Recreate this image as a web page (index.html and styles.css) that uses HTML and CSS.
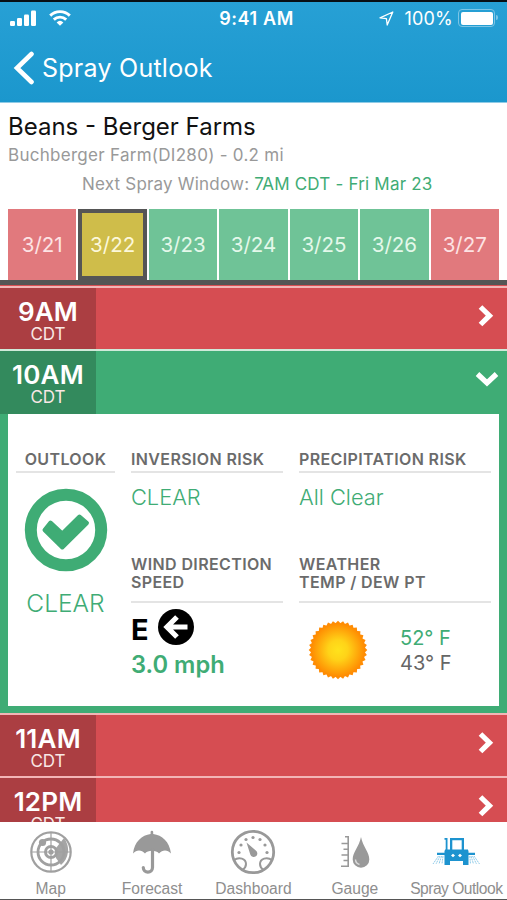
FILE: index.html
```html
<!DOCTYPE html>
<html lang="en">
<head>
    <meta charset="UTF-8" />
    <title>Spray Outlook</title>
    <link rel="stylesheet" href="styles.css">
</head>
<body>
<div class="app">

    <header class="header">
        <div class="status">
            <div class="status-left">
                <svg width="26" height="16" viewBox="0 0 26 16" fill="#fff">
                    <rect x="0" y="11" width="5" height="5" rx="1.2"/>
                    <rect x="7" y="8" width="5" height="8" rx="1.2"/>
                    <rect x="14" y="4.500" width="5" height="11.500" rx="1.2"/>
                    <rect x="21" y="0.500" width="5" height="15.500" rx="1.2"/>
                </svg>
                <svg width="22" height="16" viewBox="0 0 22 16" fill="none" stroke="#fff" stroke-width="2.900">
                    <path d="M1.200 5.600a14 14 0 0 1 19.600 0"/>
                    <path d="M4.800 9.600a9 9 0 0 1 12.400 0"/>
                    <path d="M7.600 12.400a5 5 0 0 1 6.800 0L11 15.800z" fill="#fff" stroke="none"/>
                </svg>
            </div>
            <span class="clock">9:41 AM</span>
            <div class="status-right">
                <svg width="15" height="15" viewBox="0 0 15 15" fill="none" stroke="#fff" stroke-width="1.300" stroke-linejoin="round">
                    <path d="M13.800 1L1 6.800l6.400 .8.800 6.400z"/>
                </svg>
                <span class="percent">100%</span>
                <span class="battery"></span>
            </div>
        </div>
        <div class="nav">
            <svg width="22" height="34" viewBox="0 0 22 34" fill="none" stroke="#fff" stroke-width="4.600" stroke-linecap="round">
                <path d="M18.500 3L4 17L18.500 31"/>
            </svg>
            <span class="nav-title">Spray Outlook</span>
        </div>
    </header>

    <section class="field">
        <h1 class="field-name">Beans - Berger Farms</h1>
        <div class="field-place">Buchberger Farm(DI280) - 0.2 mi</div>
        <div class="field-next"><span class="next-label">Next Spray Window:</span> <span class="next-time">7AM CDT - Fri Mar 23</span></div>
    </section>

    <div class="days">
        <div class="day bad">3/21</div>
        <div class="day selected">3/22</div>
        <div class="day">3/23</div>
        <div class="day">3/24</div>
        <div class="day">3/25</div>
        <div class="day">3/26</div>
        <div class="day bad">3/27</div>
    </div>

    <main class="hours">
        <div class="hour">
            <div class="time"><b>9AM</b><span>CDT</span></div>
            <svg class="arrow" width="16" height="24" viewBox="0 0 16 24"><path d="M2.500 3L11.500 11.700L2.500 20.500"/></svg>
        </div>

        <div class="hour good">
            <div class="time"><b>10AM</b><span>CDT</span></div>
            <svg class="arrow down" width="24" height="16" viewBox="0 0 24 16"><path d="M2.500 3L12 12L21.500 3"/></svg>
        </div>
        <div class="details">
            <div class="outlook">
                <h2>OUTLOOK</h2>
                <svg width="84" height="84" viewBox="0 0 84 84">
                    <circle cx="42" cy="42" r="35.200" fill="none" stroke="#3fac75" stroke-width="12"/>
                    <path d="M26.500 34.500L38.300 45.500L55.500 28.500L63 35L38.300 59.500L20.500 42z" fill="#3fac75" stroke="#3fac75" stroke-width="4" stroke-linejoin="round"/>
                </svg>
                <div class="outlook-value">CLEAR</div>
            </div>
            <div class="cell">
                <h2>INVERSION RISK</h2>
                <div class="value">CLEAR</div>
            </div>
            <div class="cell">
                <h2>PRECIPITATION RISK</h2>
                <div class="value precip">All Clear</div>
            </div>
            <div class="cell">
                <h2>WIND DIRECTION<br>SPEED</h2>
                <div class="wind">
                    <span>E</span>
                    <svg width="36" height="36" viewBox="0 0 36 36">
                        <circle cx="18" cy="18" r="18"/>
                        <path d="M29.500 18H10M19 8L9 18L19 28" fill="none" stroke="#fff" stroke-width="5.200"/>
                    </svg>
                </div>
                <div class="speed">3.0 mph</div>
            </div>
            <div class="cell">
                <h2>WEATHER<br>TEMP / DEW PT</h2>
                <div class="weather">
                    <svg width="60" height="60" viewBox="-30 -30 60 60">
                        <defs>
                            <radialGradient id="sun" gradientUnits="userSpaceOnUse" cx="0" cy="0" r="28">
                                <stop offset="0" stop-color="#ffe21c"/>
                                <stop offset=".35" stop-color="#ffd318"/>
                                <stop offset="1" stop-color="#ff8600"/>
                            </radialGradient>
                            <!-- nine turned squares make the rays -->
                            <path id="ray" d="M0-29.300L29.300 0L0 29.300L-29.300 0z"/>
                        </defs>
                        <g fill="#ff8c04">
                            <use href="#ray"/>
                            <use href="#ray" transform="rotate(10)"/>
                            <use href="#ray" transform="rotate(20)"/>
                            <use href="#ray" transform="rotate(30)"/>
                            <use href="#ray" transform="rotate(40)"/>
                            <use href="#ray" transform="rotate(50)"/>
                            <use href="#ray" transform="rotate(60)"/>
                            <use href="#ray" transform="rotate(70)"/>
                            <use href="#ray" transform="rotate(80)"/>
                        </g>
                        <circle r="26.500" fill="url(#sun)"/>
                    </svg>
                    <div class="temps">
                        <span class="temp">52° F</span>
                        <span class="dew">43° F</span>
                    </div>
                </div>
            </div>
        </div>

        <div class="hour">
            <div class="time"><b>11AM</b><span>CDT</span></div>
            <svg class="arrow" width="16" height="24" viewBox="0 0 16 24"><path d="M2.500 3L11.500 11.700L2.500 20.500"/></svg>
        </div>
        <div class="hour">
            <div class="time"><b>12PM</b><span>CDT</span></div>
            <svg class="arrow" width="16" height="24" viewBox="0 0 16 24"><path d="M2.500 3L11.500 11.700L2.500 20.500"/></svg>
        </div>
    </main>

    <nav class="tabs">
        <a class="tab">
            <svg width="44" height="46" viewBox="0 0 44 46" fill="none" stroke="#a0a0a0" stroke-width="1.200">
                <path d="M27 19L35 9A19.500 19.500 0 0 1 32 36L27 29z" fill="#a5a5a5" stroke="none"/>
                <circle cx="22" cy="23" r="19.700" stroke-width="2.200"/>
                <circle cx="22" cy="23" r="13" stroke-width="2.800"/>
                <circle cx="22" cy="23" r="5.500" stroke-width="3"/>
                <path d="M22 3v40M2 23h40"/>
                <circle cx="22" cy="23" r="2" fill="#a0a0a0"/>
                <circle cx="13.500" cy="13.500" r="3.600" fill="#a0a0a0" stroke="none"/>
            </svg>
            <span>Map</span>
        </a>
        <a class="tab">
            <svg width="44" height="46" viewBox="0 0 44 46" fill="#999">
                <path d="M3 24.500C4.500 12.500 12 6 20.600 5V3a1.300 1.300 0 0 1 2.600 0V5C32 6 39.500 12.500 41 24.500C37.500 20.500 32.500 20.500 29 24.500C26.500 20.800 17.500 20.800 15 24.500C11.500 20.500 6.500 20.500 3 24.500z"/>
                <path d="M22.500 21V38.500a4.600 4.600 0 0 1-9.200 0" fill="none" stroke="#999" stroke-width="3.200" stroke-linecap="round"/>
            </svg>
            <span>Forecast</span>
        </a>
        <a class="tab">
            <svg width="46" height="46" viewBox="0 0 46 46" fill="none" stroke="#999" stroke-width="2">
                <circle cx="23" cy="23" r="20.700" stroke-width="2.800"/>
                <path d="M4 31C9 27.500 16 29.500 16 35C16 38 14.500 39.500 12.500 41M42 31C37 27.500 30 29.500 30 35C30 38 31.500 39.500 33.500 41"/>
                <path d="M16.500 13.500L25.800 21.500A3.600 3.600 0 1 1 20.300 25.500z" fill="#999" stroke="none"/>
                <g fill="#999" stroke="none">
                    <circle cx="9" cy="23.500" r="1.600"/><circle cx="11" cy="16" r="1.600"/>
                    <circle cx="16" cy="10.500" r="1.600"/><circle cx="23" cy="8.500" r="1.600"/>
                    <circle cx="30" cy="10.500" r="1.600"/><circle cx="35" cy="16" r="1.600"/>
                    <circle cx="37" cy="23.500" r="1.600"/>
                </g>
            </svg>
            <span>Dashboard</span>
        </a>
        <a class="tab">
            <svg width="44" height="46" viewBox="0 0 44 46" fill="none" stroke="#999" stroke-width="1.600">
                <path d="M15.200 7v30.500M16 37.300H8M15 31.500H10.500M15 26H8.500M15 20.300H10.500M15 14.500H8.500M16 7.700H12"/>
                <path d="M28 8C30 18 36.300 23 36.300 30.500A8.300 8.300 0 0 1 19.700 30.500C19.700 23 26 18 28 8z" fill="#999" stroke="none"/>
                <path d="M22.500 30.500A5.500 5.500 0 0 0 26.500 35.500" stroke="#ddd" stroke-width="1.400"/>
            </svg>
            <span>Gauge</span>
        </a>
        <a class="tab active">
            <svg width="50" height="46" viewBox="0 0 50 46" fill="#1d93cf">
                <path d="M19 9H33V23H19zM21.300 11.200V21.500H30.700V11.200z" fill-rule="evenodd"/>
                <path d="M13.500 9h3v13h-1.800V10.800h-1.200zM14 20.500h23V24H14zM16 23.500h19v7H16z"/>
                <path d="M13.500 21.500h5.500V36h-5.500zM32 21.500h5.500V36H32zM6 23.800H44v2.200H6zM17 28.500h17v3.500H17z"/>
                <path d="M20 26.500l2-1.700 2 1.700-2 1.700zM27 26.500l2-1.700 2 1.700-2 1.700z" fill="#fff"/>
                <path d="M7.500 27L2 35M9 27L5 35M10.500 27L8 35M12 27L11 35M43 27L48.500 35M41.500 27L45.500 35M40 27L42.500 35M38.800 27L39.500 35" fill="none" stroke="#90cbe9" stroke-width="1" stroke-dasharray="2 .7"/>
            </svg>
            <span>Spray Outlook</span>
        </a>
    </nav>
</div>
</body>
</html>
```
FILE: styles.css
```css
* {
    box-sizing: border-box;
}
body {
    margin: 0;
    font-family: Inter, "Liberation Sans", sans-serif;
    background-color: #fff;
}
h1, h2 {
    margin: 0;
}
svg {
    display: block;
    flex: none;
}
.app {
    display: flex;
    flex-direction: column;
    width: 507px;
    height: 900px;
    overflow: hidden;
    white-space: nowrap;
    border-top: 2px solid #080f14;
    border-bottom: 1px solid #555;
}

/* header */
.header {
    flex: none;
    height: 101px;
    background: linear-gradient(#27a0d5, #1b97cd);
    border-bottom: 1px solid #8fcbe6;
    color: #fff;
}
.status {
    display: grid;
    grid-template-columns: 1fr auto 1fr;
    align-items: center;
    height: 32px;
    padding: 0 12px 0 10px;
}
.status-left, .status-right {
    display: flex;
    align-items: center;
}
.status-left {
    gap: 13px;
    padding-bottom: 1px;
}
.clock {
    margin-left: 8px;
    font-size: 18px;
    font-weight: 600;
    letter-spacing: 0.6px;
}
.status-right {
    justify-content: flex-end;
}
.percent {
    margin: 0 5px 0 10px;
    font-size: 18px;
    letter-spacing: 0.2px;
}
.battery {
    position: relative;
    width: 37px;
    height: 18px;
    border: 1.5px solid #7cc5e6;
    border-radius: 4px;
    padding: 1.5px;
}
.battery::before {
    content: "";
    display: block;
    height: 100%;
    background-color: #fff;
    border-radius: 2px;
}
.battery::after {
    content: "";
    position: absolute;
    top: 5px;
    right: -4px;
    width: 2px;
    height: 5px;
    background-color: #7cc5e6;
    border-radius: 0 2px 2px 0;
}
.nav {
    display: flex;
    align-items: center;
    gap: 7px;
    height: 68px;
    padding: 0 0 1px 13px;
}
.nav-title {
    padding-top: 1px;
    font-size: 25px;
    letter-spacing: 0.25px;
}

/* field info */
.field {
    flex: none;
    height: 106px;
    padding: 9px 8px 0;
    color: #999;
}
.field-name {
    font-size: 24px;
    line-height: 30px;
    font-weight: 400;
    color: #111;
}
.field-place {
    margin-top: 1px;
    font-size: 17px;
    line-height: 24px;
    letter-spacing: 0.28px;
}
.field-next {
    margin-top: 5px;
    padding-left: 74px;
    font-size: 17px;
    line-height: 24px;
    letter-spacing: 0.2px;
}
.next-time {
    color: #3fac75;
}

/* days */
.days {
    flex: none;
    display: grid;
    grid-template-columns: repeat(7, 1fr);
    gap: 2px;
    height: 76px;
    padding: 0 8px;
    border-bottom: 5px solid #555;
}
.day {
    display: flex;
    align-items: center;
    justify-content: center;
    background-color: #6fc397;
    color: #e4f8ea;
    font-size: 20.5px;
}
.day.bad {
    background-color: #e1797d;
    color: #fde3e4;
}
.day.selected {
    background-color: #cfbd4a;
    border: 4px solid #555;
    color: #fcf8da;
}

/* hours */
.hours {
    flex: 1;
    min-height: 0;
    overflow: hidden;
    border-top: 1px solid #d84e53;
}
.hour {
    display: flex;
    align-items: center;
    justify-content: space-between;
    height: 63px;
    padding-right: 13px;
    border-top: 2px solid #f3b5b6;
    background-color: #d64d52;
}
.hour.good {
    height: 65px;
    background-color: #3fac75;
    border-top-color: #cfead9;
    padding-right: 8px;
}
.time {
    display: flex;
    flex-direction: column;
    align-items: center;
    align-self: stretch;
    width: 96px;
    padding-top: 10px;
    background-color: #ab3e42;
    color: #fff;
}
.hour.good .time {
    background-color: #338a5d;
}
.time b {
    font-size: 26px;
    line-height: 27px;
    font-weight: 600;
    letter-spacing: 0.2px;
}
.time span {
    font-size: 17px;
    line-height: 18px;
    color: #f9e8e5;
}
.arrow {
    margin-bottom: 6px;
    fill: none;
    stroke: #fff;
    stroke-width: 5.2px;
}
.arrow.down {
    margin-bottom: 8px;
}

/* details of the open hour */
.details {
    display: grid;
    grid-template-columns: 99px 152px 192px;
    grid-template-rows: 105px 1fr;
    column-gap: 16px;
    height: 299px;
    padding: 36px 8px 0;
    background-color: #fff;
    border: 8px solid #3fac75;
    border-top: 0;
    border-bottom-width: 7px;
    color: #3fac75;
}
.outlook {
    grid-row: span 2;
    display: flex;
    flex-direction: column;
    align-items: center;
}
h2 {
    align-self: stretch;
    padding-bottom: 3px;
    border-bottom: 2px solid #e4e4e4;
    color: #6b6b6b;
    font-size: 16px;
    font-weight: 600;
    line-height: 18px;
    letter-spacing: 0.38px;
}
.outlook h2 {
    text-align: center;
}
.outlook svg {
    margin-top: 15px;
}
.outlook-value {
    margin-top: 14px;
    font-size: 24.5px;
    line-height: 34px;
    font-weight: 300;
}
.value {
    margin-top: 9px;
    font-size: 21.8px;
    line-height: 30px;
    font-weight: 300;
}
.precip {
    font-size: 21.8px;
}
.cell:nth-child(n+4) h2 {
    padding-bottom: 10px;
}
.wind {
    display: flex;
    align-items: center;
    gap: 9px;
    height: 36px;
    margin-top: 6px;
    color: #000;
    font-size: 29px;
    font-weight: 700;
}
.wind span {
    padding-top: 4px;
}
.speed {
    font-size: 23.7px;
    line-height: 30px;
    margin-top: 5px;
    font-weight: 600;
}
.weather {
    display: flex;
    align-items: center;
    gap: 32px;
    padding: 17px 0 0 9px;
}
.temps {
    display: flex;
    flex-direction: column;
    padding-top: 2px;
    font-size: 20px;
    line-height: 25px;
}
.dew {
    color: #666;
}

/* bottom tabs */
.tabs {
    flex: none;
    display: grid;
    grid-template-columns: repeat(5, 1fr);
    height: 77px;
    background-color: #fff;
}
.tab {
    display: flex;
    flex-direction: column;
    align-items: center;
    padding-top: 7px;
    color: #8e8e8e;
    font-family: "Liberation Sans", Arial, sans-serif;
    font-size: 15.6px;
}
.tab span {
    margin-top: 5px;
    line-height: 18px;
}
.tab.active span {
    letter-spacing: -0.5px;
}
```
